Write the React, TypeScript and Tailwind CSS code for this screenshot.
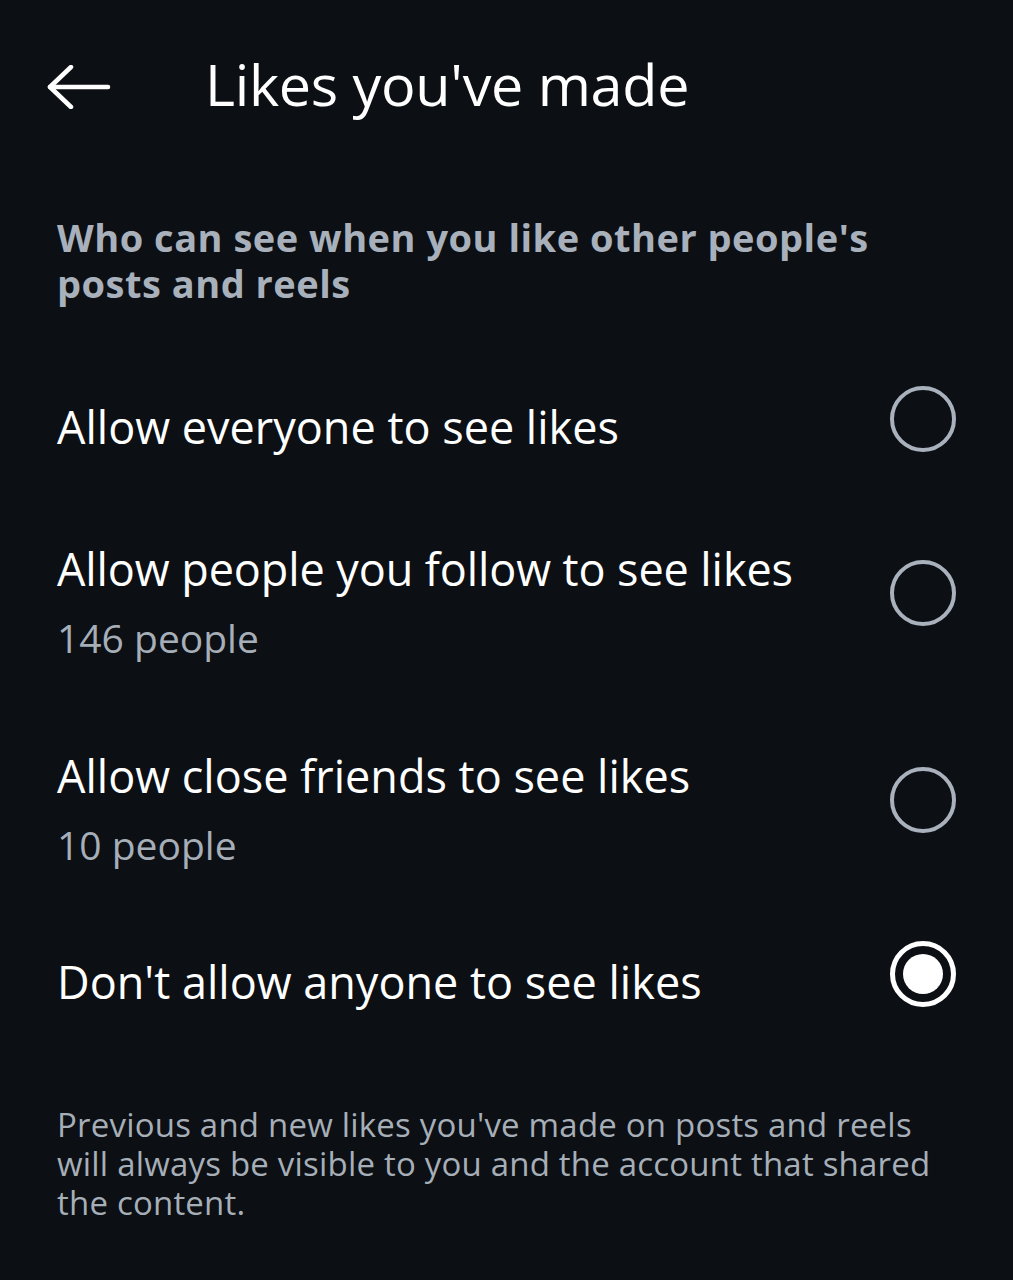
import React from "react";

const font = { fontFamily: '"Open Sans", "Noto Sans", sans-serif' };

function Radio({ selected }: { selected?: boolean }) {
  if (selected) {
    return (
      <div className="w-[66px] h-[66px] rounded-full border-[5px] border-white flex items-center justify-center shrink-0">
        <div className="w-[40px] h-[40px] rounded-full bg-white" />
      </div>
    );
  }
  return <div className="w-[66px] h-[66px] rounded-full border-[4px] border-[#a9b2bc] shrink-0" />;
}

export default function App() {
  return (
    <div className="w-[1013px] h-[1280px] bg-[#0c0f14] overflow-hidden" style={font}>
      <div className="flex items-center h-[174px] pl-[47px]">
        <svg width="64" height="44" viewBox="0 0 64 44" fill="none" stroke="white" strokeWidth="4.5" strokeLinecap="round" strokeLinejoin="round">
          <path d="M3 22 H61" />
          <path d="M24 2 L3 22 L24 42" />
        </svg>
        <div className="ml-[94px] text-[57.5px] text-white leading-none -mt-[4px] tracking-[-0.3px]">Likes you've made</div>
      </div>
      <div className="px-[57px]">
        <div className="mt-[40px] text-[38px] leading-[46px] font-bold text-[#a8b1bb] tracking-[0.5px]">
          Who can see when you like other people's
          <br />
          posts and reels
        </div>

        {/* Row 1 */}
        <div className="mt-[74px] flex items-start justify-between">
          <div className="mt-[19px] text-[45px] leading-[56px] text-white">Allow everyone to see likes</div>
          <div className="mt-[6px]">
            <Radio />
          </div>
        </div>

        {/* Row 2 */}
        <div className="mt-[86px] flex items-start justify-between">
          <div className="flex flex-col">
            <div className="text-[45px] leading-[56px] text-white tracking-[-0.1px]">Allow people you follow to see likes</div>
            <div className="mt-[17px] text-[39px] leading-[48px] text-[#a6aeb8]">146 people</div>
          </div>
          <div className="mt-[19px]">
            <Radio />
          </div>
        </div>

        {/* Row 3 */}
        <div className="mt-[86px] flex items-start justify-between">
          <div className="flex flex-col">
            <div className="text-[45px] leading-[56px] text-white">Allow close friends to see likes</div>
            <div className="mt-[17px] text-[39px] leading-[48px] text-[#a6aeb8]">10 people</div>
          </div>
          <div className="mt-[19px]">
            <Radio />
          </div>
        </div>

        {/* Row 4 */}
        <div className="mt-[72px] flex items-start justify-between">
          <div className="mt-[13px] text-[45px] leading-[56px] text-white">Don't allow anyone to see likes</div>
          <div>
            <Radio selected />
          </div>
        </div>

        <div className="mt-[95px] text-[33px] leading-[39px] text-[#a6aeb8] tracking-[0.2px]">
          Previous and new likes you've made on posts and reels
          <br />
          will always be visible to you and the account that shared
          <br />
          the content.
        </div>
      </div>
    </div>
  );
}
